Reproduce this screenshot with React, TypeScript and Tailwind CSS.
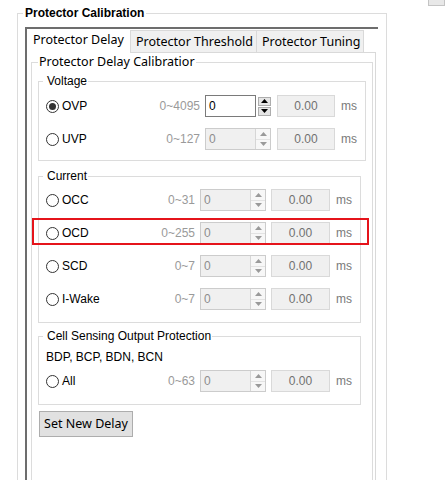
import type { ReactNode } from 'react'

const arial = "font-['Liberation_Sans',Arial,sans-serif]"
const ui = "font-['Noto_Sans',sans-serif]"

function Arrow({ up, color }: { up?: boolean; color: string }) {
  return (
    <svg width="7" height="4" viewBox="0 0 7 4">
      <path d={up ? 'M0 4 L3.5 0 L7 4 Z' : 'M0 0 L3.5 4 L7 0 Z'} fill={color} />
    </svg>
  )
}

function Spin({ enabled }: { enabled?: boolean }) {
  if (enabled) {
    return (
      <div className="flex h-[22px] w-[66px]">
        <div className="flex-1 border border-[#7a7a7a] bg-white pl-[3px] text-[12px] leading-[20px] text-black">0</div>
        <div className="ml-[2px] flex w-[13px] flex-col justify-center gap-[1px] py-[1px]">
          <div className="flex h-[9px] items-center justify-center border border-[#adadad] bg-[#e5e5e5]">
            <Arrow up color="#000" />
          </div>
          <div className="flex h-[9px] items-center justify-center border border-[#adadad] bg-[#e5e5e5]">
            <Arrow color="#000" />
          </div>
        </div>
      </div>
    )
  }
  return (
    <div className="flex h-[22px] w-[66px] border border-[#cccccc] bg-[#f0f0f0]">
      <div className="flex-1 pl-[3px] text-[12px] leading-[20px] text-[#8d8d8d]">0</div>
      <div className="flex w-[15px] flex-col border-l border-[#d6d6d6] bg-[#f7f7f7]">
        <div className="flex flex-1 items-center justify-center border-b border-[#e3e3e3]">
          <Arrow up color="#9a9a9a" />
        </div>
        <div className="flex flex-1 items-center justify-center">
          <Arrow color="#9a9a9a" />
        </div>
      </div>
    </div>
  )
}

function Radio({ checked }: { checked?: boolean }) {
  return (
    <span className="flex h-[13px] w-[13px] shrink-0 items-center justify-center rounded-full border border-[#333333] bg-white">
      {checked ? <span className="h-[7px] w-[7px] rounded-full bg-[#333333]" /> : null}
    </span>
  )
}

interface RowProps {
  label: string
  range: string
  checked?: boolean
  wide?: boolean
}

function Row({ label, range, checked, wide }: RowProps) {
  return (
    <div className="flex h-[22px] items-center pl-[7px] text-[12px]">
      <div className={`flex items-center justify-between ${wide ? 'w-[154px]' : 'w-[149px]'}`}>
        <div className="flex items-center">
          <Radio checked={checked} />
          <span className="ml-[3px] text-black">{label}</span>
        </div>
        <span className="text-[#9a9a9a]">{range}</span>
      </div>
      <div className="ml-[5px]">
        <Spin enabled={checked} />
      </div>
      <div
        className={`flex h-[22px] items-center justify-center border border-[#d9d9d9] bg-[#f0f0f0] text-[#707070] ${
          wide ? 'ml-[6px] w-[58px]' : 'ml-[5px] w-[59px]'
        }`}
      >
        0.00
      </div>
      <span className="ml-[6px] text-[#7a7a7a]">ms</span>
    </div>
  )
}

function Group({ title, className, children }: { title: string; className: string; children: ReactNode }) {
  return (
    <fieldset className={`ml-[6px] border border-[#dcdcdc] ${className}`}>
      <legend className="ml-[4px] pl-[4px] pr-[1px] text-[12px] leading-[14px] text-black">{title}</legend>
      {children}
    </fieldset>
  )
}

export default function App() {
  return (
    <div className={`relative flex h-[480px] w-[445px] overflow-hidden bg-white ${arial}`}>
      <fieldset className="ml-[17px] mt-[6px] h-[520px] w-[370px] shrink-0 border border-[#dcdcdc]">
        <legend className="ml-[5px] px-[2px] text-[12px] font-bold leading-[14px] text-black">
          Protector Calibration
        </legend>

        <div className="ml-[7px] mt-[7px] h-[500px] w-[353px] border-l-2 border-t-2 border-[#6d6d6d]">
          <div className={`flex h-[24px] w-[349px] items-end text-[12.5px] text-black ${ui}`}>
            <div className="h-[24px] w-[103px] bg-white pl-[6px] pt-[2px] leading-[17px]">Protector Delay</div>
            <div className="h-[23px] w-[127px] border border-[#d9d9d9] bg-[#f0f0f0] pl-[5px] pt-[2px] leading-[17px]">
              Protector Threshold
            </div>
            <div className="h-[23px] w-[107px] border border-l-0 border-[#d9d9d9] bg-[#f0f0f0] pl-[5px] pt-[2px] leading-[17px]">
              Protector Tuning
            </div>
            <div className="h-[23px] flex-1 border-b border-[#d9d9d9]" />
          </div>

          <div className="h-[460px] w-[349px] border-r border-[#d9d9d9] bg-white pt-[1px]">
            <fieldset className="ml-[4px] h-[460px] w-[342px] border border-[#dcdcdc]">
              <legend className={`ml-[6px] pl-[1px] pr-[1px] text-[12.5px] leading-[16px] text-black ${ui}`}>
                Protector Delay Calibratior
              </legend>

              <Group title="Voltage" className="mt-[4px] w-[328px] pb-[10px]">
                <div className="mt-[7px] flex flex-col gap-[11px]">
                  <Row label="OVP" range="0~4095" checked wide />
                  <Row label="UVP" range="0~127" wide />
                </div>
              </Group>

              <Group title="Current" className="mt-[8px] w-[323px] pb-[12px]">
                <div className="mt-[6px] flex flex-col gap-[11px]">
                  <Row label="OCC" range="0~31" />
                  <Row label="OCD" range="0~255" />
                  <Row label="SCD" range="0~7" />
                  <Row label="I-Wake" range="0~7" />
                </div>
              </Group>

              <Group title="Cell Sensing Output Protection" className="mt-[6px] w-[323px] pb-[12px]">
                <div className="mt-[7px] pl-[7px] text-[12px] leading-[14px] text-black">BDP, BCP, BDN, BCN</div>
                <div className="mt-[6px]">
                  <Row label="All" range="0~63" />
                </div>
              </Group>

              <button
                type="button"
                className={`ml-[7px] mt-[6px] h-[26px] w-[94px] border border-[#adadad] bg-[#e1e1e1] text-[12.5px] leading-[20px] text-black ${ui}`}
              >
                Set New Delay
              </button>
            </fieldset>
          </div>
        </div>
      </fieldset>

      <div className="ml-auto h-[6px] w-[17px] border border-t-0 border-[#c4c4c4] bg-[#e8e8e8]" />

      <div className="absolute left-[32px] top-[218px] h-[27px] w-[337px] border-2 border-[#e5141b]" />
    </div>
  )
}
